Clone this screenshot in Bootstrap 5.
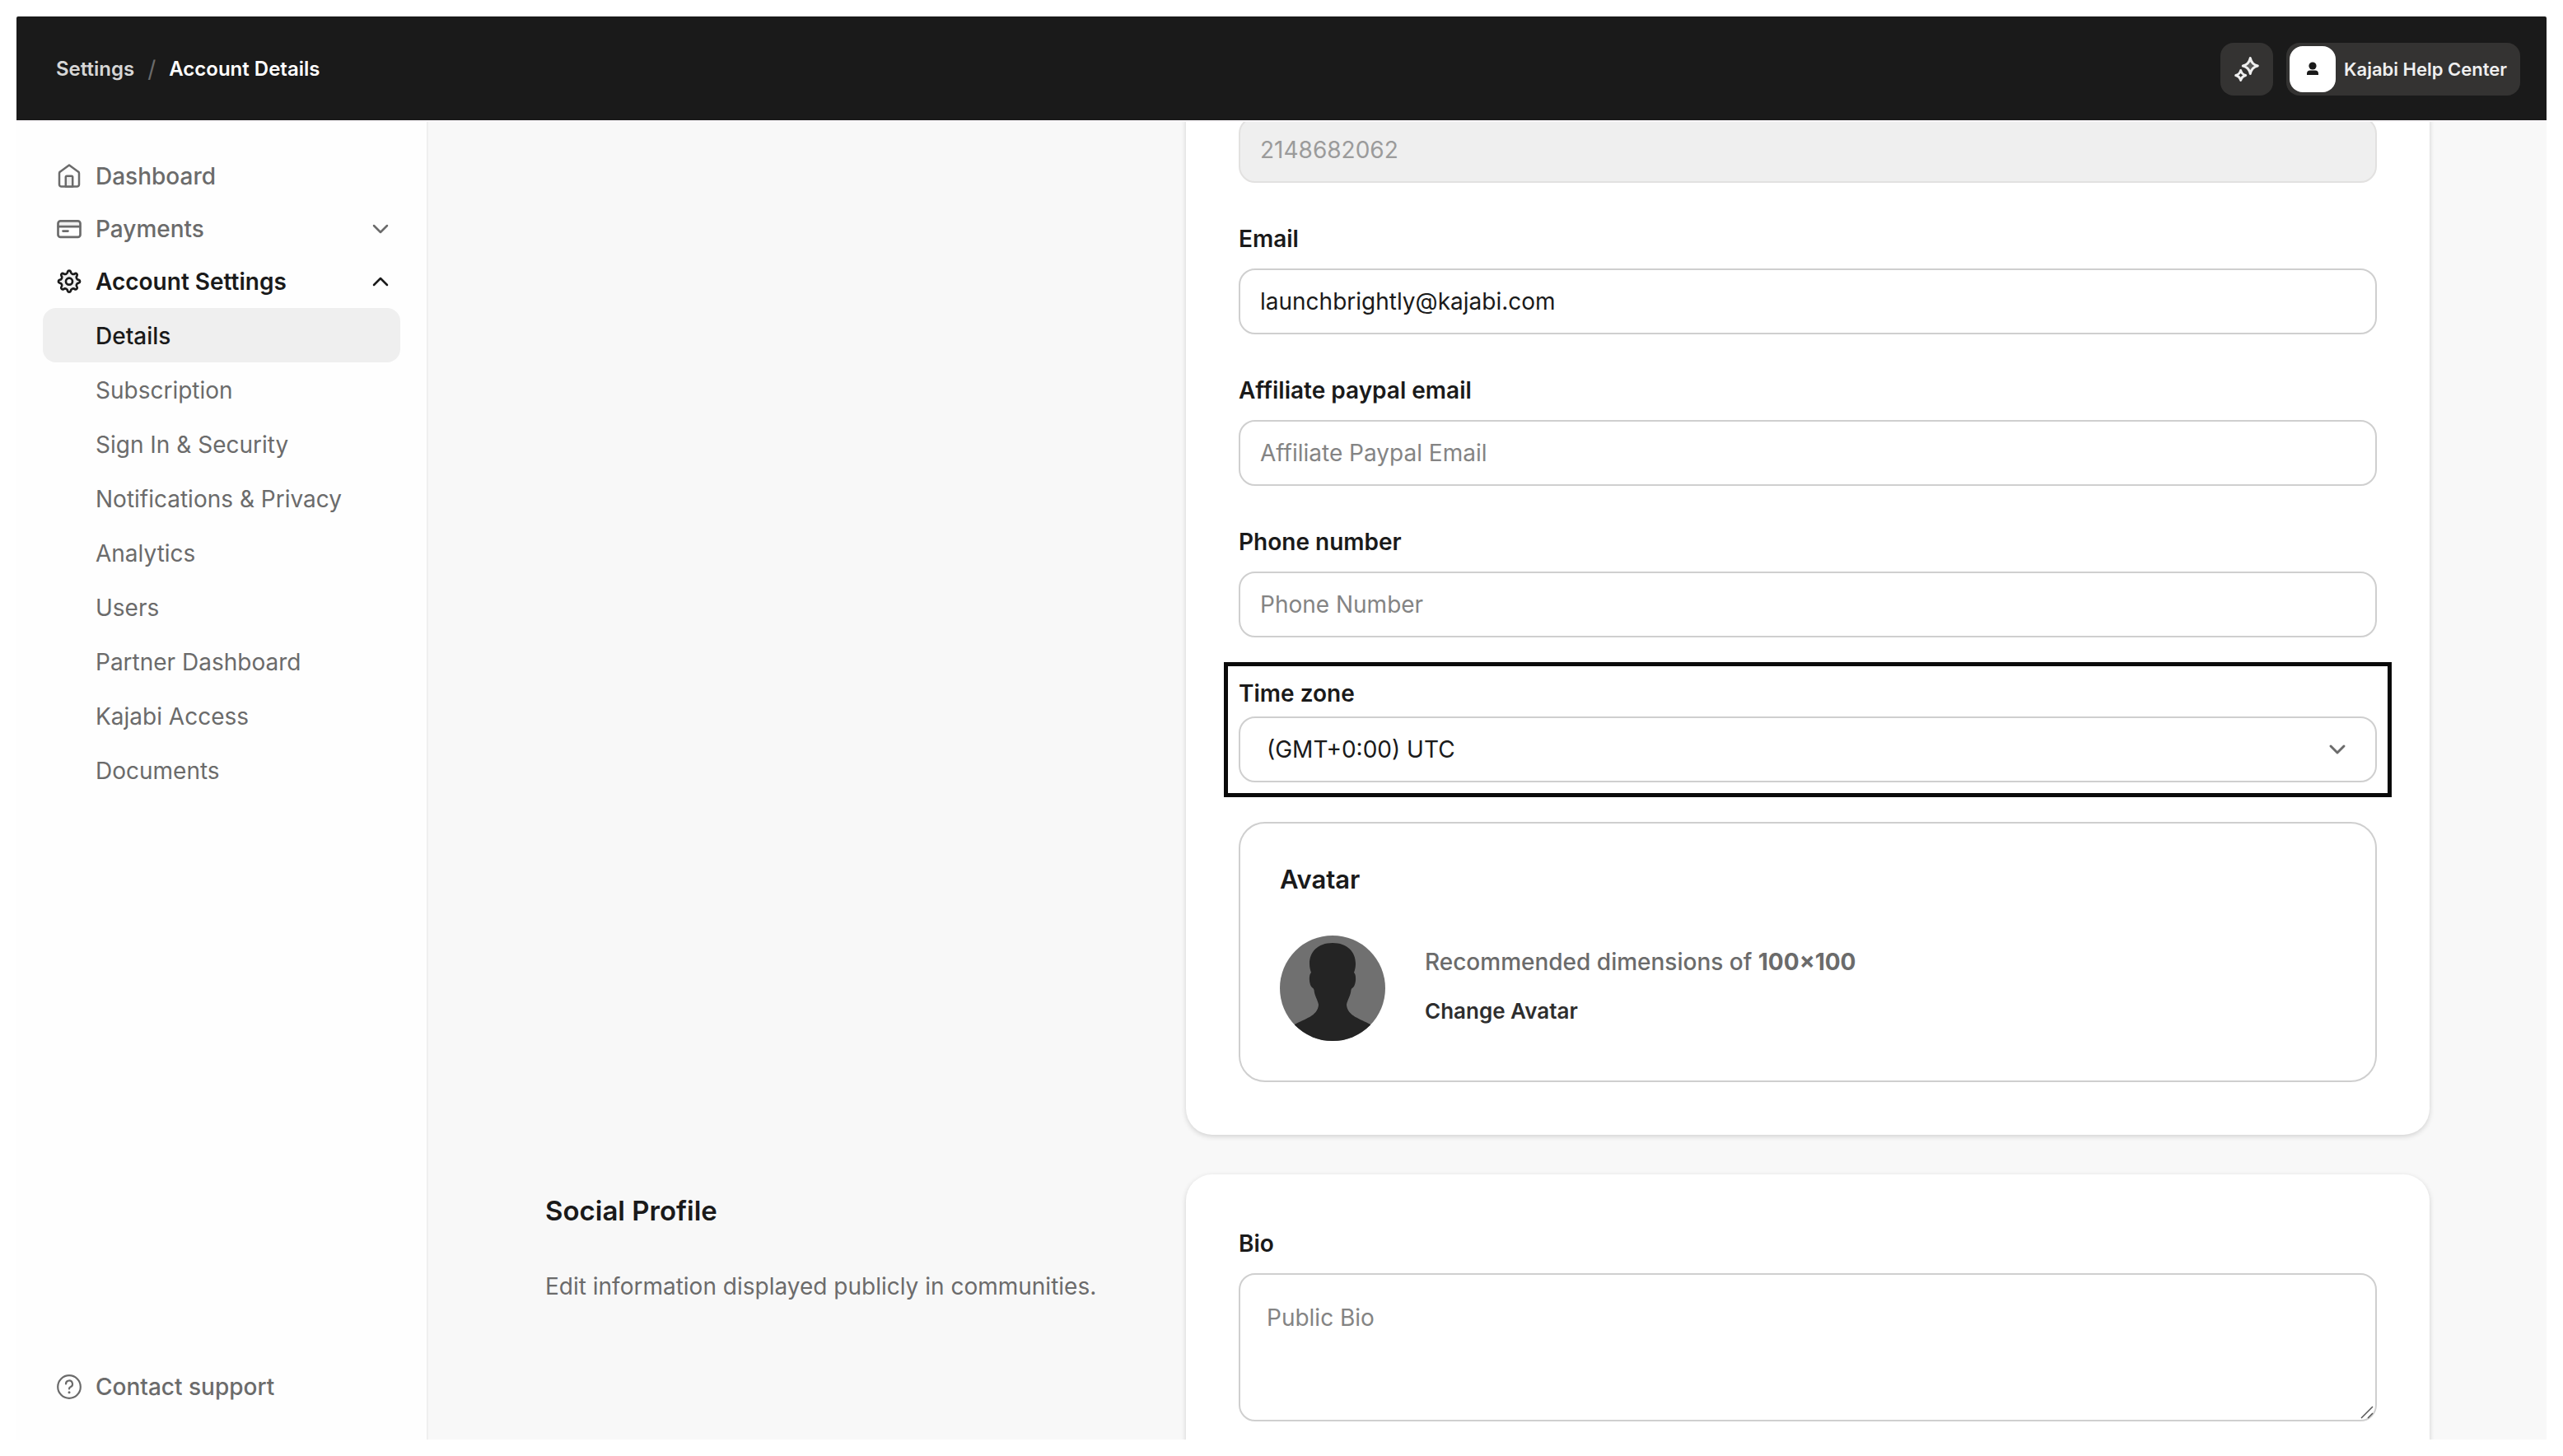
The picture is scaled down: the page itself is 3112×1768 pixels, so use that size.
<!DOCTYPE html>
<html lang="en">
<head>
<meta charset="utf-8">
<meta name="viewport" content="width=device-width, initial-scale=1">
<title>Account Details</title>
<link href="https://cdn.jsdelivr.net/npm/bootstrap@5.3.0/dist/css/bootstrap.min.css" rel="stylesheet">
<style>
  :root { --ink: #1a1a1a; --muted: #6b6b6b; --line: #cfcfcf; --soft: #efefef; }
  body { font-family: Inter, "Liberation Sans", sans-serif; font-size: 28px; line-height: 40px; color: var(--ink); background: #fff; padding: 20px; }
  svg { display: block; flex: none; overflow: visible; }
  .topbar { background: #1a1a1a; padding: 32px 32px 30px 48px; border-bottom: 2px solid #f8f6f8; border-radius: 2px 2px 0 0; font-size: 24px; font-weight: 600; }
  .crumbs { gap: 16px; color: #fff; }
  .crumbs a { color: #d6d6d6; }
  .crumbs span { color: #6b6b6b; font-size: 28px; font-weight: 400; }
  .spark-btn { width: 64px; height: 64px; border-radius: 16px; background: #343332; color: #efefef; }
  .account-btn { height: 64px; border-radius: 16px; background: #343332; color: #efefef; font-size: 22px; font-weight: 600; padding: 4px 16px 4px 4px; gap: 10px; }
  .account-face { width: 56px; height: 56px; border-radius: 16px; background: #fff; color: #1a1a1a; }
  .side { width: 500px; border-right: 2px solid var(--soft); padding: 34px 32px 32px; background: #fefefe; }
  .side a, .side button { color: var(--muted); text-decoration: none; padding: 0 16px; text-align: left; border-radius: 16px; border: 0; background: none; }
  .side-main { height: 64px; gap: 16px; font-weight: 500; }
  .side .is-open { color: var(--ink); font-weight: 600; }
  .side .side-sub a { height: 66px; padding: 2px 16px 0 64px; }
  .side .side-sub a.is-current { background: var(--soft); color: var(--ink); font-weight: 500; }
  .content { background: #f8f8f8; padding: 0 142px; }
  .content .row { --bs-gutter-x: 46px; }
  .panel { background: #fff; border-radius: 32px; padding: 64px; box-shadow: 0 2px 6px rgba(0,0,0,.16); }
  .panel-under { border-top-left-radius: 0; border-top-right-radius: 0; padding-top: 0; }
  .panel-under > form { margin-top: -6px; }
  .stack { display: flex; flex-direction: column; gap: 48px; }
  .stack label { display: block; font-weight: 600; margin-bottom: 16px; }
  .stack .tight label { margin-bottom: 8px; }
  .stack .form-control, .stack .form-select { font-size: 28px; line-height: 40px; height: 80px; border: 2px solid var(--line); border-radius: 20px; padding: 18px 24px; color: var(--ink); background-color: #fff; }
  .stack .form-control::placeholder { color: #848484; }
  .stack .form-control:disabled { background: var(--soft); border-color: #e2e1e0; color: #9b9b9b; opacity: 1; }
  .stack .form-select { padding-left: 32px; background-image: none; }
  .stack textarea.form-control { height: 180px; padding: 32px; resize: none; }
  .pick-arrow { position: absolute; right: 32px; bottom: 24px; color: var(--muted); pointer-events: none; }
  .grip { position: absolute; right: 2px; bottom: 2px; pointer-events: none; }
  .callout-frame { position: absolute; inset: -18px; border: 5px solid #0a0a0a; pointer-events: none; }
  .avatar-box { border: 2px solid var(--line); border-radius: 32px; padding: 48px; }
  .avatar-box h3 { font-size: 31px; line-height: 40px; font-weight: 600; margin-bottom: 48px; }
  .avatar-row { gap: 48px; }
  .avatar-text { gap: 20px; color: var(--muted); padding-top: 12px; }
  .avatar-text button { font-size: 26px; line-height: 40px; font-weight: 600; color: #2e2e2e; border: 0; background: none; padding: 0; }
  .section-intro { padding-top: 20px; color: var(--muted); }
  .section-intro h2 { font-size: 33px; line-height: 48px; font-weight: 600; color: var(--ink); margin-bottom: 48px; }
</style>
</head>
<body class="vh-100 overflow-hidden d-flex flex-column">
<header class="topbar d-flex align-items-center justify-content-between">
  <nav class="crumbs d-flex" aria-label="Breadcrumb"><a href="#" class="text-decoration-none">Settings</a><span>/</span><div>Account Details</div></nav>
  <div class="d-flex gap-3">
    <button class="spark-btn btn p-0 border-0 d-flex align-items-center justify-content-center" type="button" aria-label="Assistant">
      <svg width="32" height="32" viewBox="0 0 32 32" fill="none" stroke="currentColor" stroke-width="3" stroke-linejoin="round"><path fill="#5a5a59" d="M20.300 2.500q1.600 7.800 9 9.500q-7.400 1.700-9 9.500q-1.600-7.800-9-9.500q7.400-1.700 9-9.500z"/><path d="M8.700 17.500q1.200 4.800 6 6q-4.800 1.200-6 6q-1.200-4.800-6-6q4.800-1.200 6-6z"/></svg>
    </button>
    <button class="account-btn btn border-0 d-flex align-items-center" type="button">
      <span class="account-face d-flex align-items-center justify-content-center"><svg width="16" height="18" viewBox="0 0 16 18" fill="currentColor"><circle cx="8" cy="5" r="4.600"/><path d="M1 16v-1.500a4 4 0 0 1 4-4h6a4 4 0 0 1 4 4V16z"/></svg></span>
      <span>Kajabi Help Center</span>
    </button>
  </div>
</header>
<div class="d-flex flex-grow-1 overflow-hidden">
  <nav class="side flex-shrink-0 d-flex flex-column" aria-label="Settings">
    <a href="#" class="side-main d-flex align-items-center"><svg width="32" height="32" viewBox="0 0 32 32" fill="none" stroke="currentColor" stroke-width="2.500" stroke-linejoin="round"><path d="M4 12.500a2.500 2.500 0 0 1 1.100-2.100L16 2.600l10.900 7.800a2.500 2.500 0 0 1 1.100 2.100V26a2.500 2.500 0 0 1-2.500 2.500h-19A2.500 2.500 0 0 1 4 26z"/><path fill="#efefef" d="M11.800 28.500V17a1.300 1.300 0 0 1 1.300-1.300h5.800a1.300 1.300 0 0 1 1.300 1.300v11.500z"/></svg>Dashboard</a>
    <button type="button" class="side-main d-flex align-items-center"><svg width="32" height="32" viewBox="0 0 32 32" fill="none" stroke="currentColor" stroke-width="2.700" stroke-linecap="round"><path fill="#efefef" stroke="none" d="M2.500 13V9a3 3 0 0 1 3-3h21a3 3 0 0 1 3 3v4z"/><rect x="2.500" y="6.300" width="27" height="19.600" rx="3"/><path d="M3 13.200h26M8.500 18.600h6"/></svg><span class="flex-grow-1">Payments</span><svg width="16" height="20" viewBox="2 0 16 20" fill="none" stroke="currentColor" stroke-width="2.500" stroke-linecap="round" stroke-linejoin="round"><path d="M2 6l8 8 8-8"/></svg></button>
    <button type="button" class="side-main is-open d-flex align-items-center"><svg width="32" height="32" viewBox="0 0 32 32" fill="none" stroke="currentColor" stroke-width="2.700" stroke-linejoin="round"><path fill="#efefef" d="M14.130 4.050A2 2.200 0 0 1 17.870 4.050A3 3 0 0 0 22.910 6.140A2 2 0 0 1 25.560 8.790A3 3 0 0 0 27.650 13.830A2.200 2 0 0 1 27.650 17.570A3 3 0 0 0 25.560 22.610A2 2 0 0 1 22.910 25.260A3 3 0 0 0 17.870 27.350A2 2.200 0 0 1 14.130 27.350A3 3 0 0 0 9.090 25.260A2 2 0 0 1 6.440 22.610A3 3 0 0 0 4.350 17.570A2.200 2 0 0 1 4.350 13.830A3 3 0 0 0 6.440 8.790A2 2 0 0 1 9.090 6.140A3 3 0 0 0 14.130 4.050z"/><circle cx="16" cy="15.700" r="4" fill="#fff"/></svg><span class="flex-grow-1">Account Settings</span><svg width="16" height="20" viewBox="2 0 16 20" fill="none" stroke="currentColor" stroke-width="2.500" stroke-linecap="round" stroke-linejoin="round"><path d="M2 14l8-8 8 8"/></svg></button>
    <div class="side-sub d-flex flex-column">
      <a href="#" class="is-current d-flex align-items-center" aria-current="page">Details</a>
      <a href="#" class="d-flex align-items-center">Subscription</a>
      <a href="#" class="d-flex align-items-center">Sign In &amp; Security</a>
      <a href="#" class="d-flex align-items-center">Notifications &amp; Privacy</a>
      <a href="#" class="d-flex align-items-center">Analytics</a>
      <a href="#" class="d-flex align-items-center">Users</a>
      <a href="#" class="d-flex align-items-center">Partner Dashboard</a>
      <a href="#" class="d-flex align-items-center">Kajabi Access</a>
      <a href="#" class="d-flex align-items-center">Documents</a>
    </div>
    <a href="#" class="side-main d-flex align-items-center mt-auto"><svg width="32" height="32" viewBox="0 0 32 32" fill="none" stroke="currentColor" stroke-width="2.200" stroke-linecap="round"><circle cx="16" cy="16" r="13.800"/><path d="M12 12.500a4 4 0 1 1 5.500 3.700c-1 .5-1.500 1-1.500 2.300"/><circle cx="16" cy="22.800" r="1.500" fill="currentColor" stroke="none"/></svg>Contact support</a>
  </nav>
  <main class="content flex-grow-1 overflow-hidden">
    <div class="row">
      <div class="col-8 offset-4">
        <section class="panel panel-under">
          <form class="stack">
            <input class="form-control" type="text" value="2148682062" aria-label="Account ID" disabled>
            <div><label for="email">Email</label><input id="email" class="form-control" type="email" value="launchbrightly@kajabi.com"></div>
            <div><label for="paypal">Affiliate paypal email</label><input id="paypal" class="form-control" type="email" placeholder="Affiliate Paypal Email"></div>
            <div><label for="phone">Phone number</label><input id="phone" class="form-control" type="tel" placeholder="Phone Number"></div>
            <div class="tight position-relative"><label for="zone">Time zone</label><select id="zone" class="form-select"><option>(GMT+0:00) UTC</option></select>
              <svg class="pick-arrow" width="32" height="32" viewBox="0 0 32 32" fill="none" stroke="currentColor" stroke-width="3" stroke-linecap="round" stroke-linejoin="round"><path d="M8 12l8 8 8-8"/></svg>
              <div class="callout-frame"></div>
            </div>
            <div class="avatar-box">
              <h3>Avatar</h3>
              <div class="avatar-row d-flex">
                <svg width="128" height="128" viewBox="0 0 128 128"><defs><clipPath id="disc"><circle cx="64" cy="64" r="64"/></clipPath></defs><g clip-path="url(#disc)"><rect width="128" height="128" fill="#707070"/><path fill="#242424" d="M64 9C46 9 36 20 36 34C36 39 37 42 38 45C35 47 35 59 39 63Q41 64 41.500 66C42 73 46 78 47 84C46 98 30 101 18 108V128H110V108C98 101 82 98 81 84C82 78 86 73 86.500 66Q87 64 89 63C93 59 93 47 90 45C91 42 92 39 92 34C92 20 82 9 64 9z"/></g></svg>
                <div class="avatar-text d-flex flex-column align-items-start"><div class="fw-medium">Recommended dimensions of <strong>100×100</strong></div><button type="button">Change Avatar</button></div>
              </div>
            </div>
          </form>
        </section>
      </div>
    </div>
    <div class="row mt-5">
      <div class="col-4"><div class="section-intro"><h2>Social Profile</h2><div>Edit information displayed publicly in communities.</div></div></div>
      <div class="col-8">
        <section class="panel stack">
          <div class="position-relative"><label for="bio">Bio</label><textarea id="bio" class="form-control" placeholder="Public Bio"></textarea>
            <svg class="grip" width="18" height="18" viewBox="0 0 18 18" stroke="#555" stroke-width="1.500"><path d="M1 16L15 2M9 16l6-6"/></svg></div>
        </section>
      </div>
    </div>
  </main>
</div>
<script src="https://cdn.jsdelivr.net/npm/bootstrap@5.3.0/dist/js/bootstrap.bundle.min.js"></script>
</body>
</html>
